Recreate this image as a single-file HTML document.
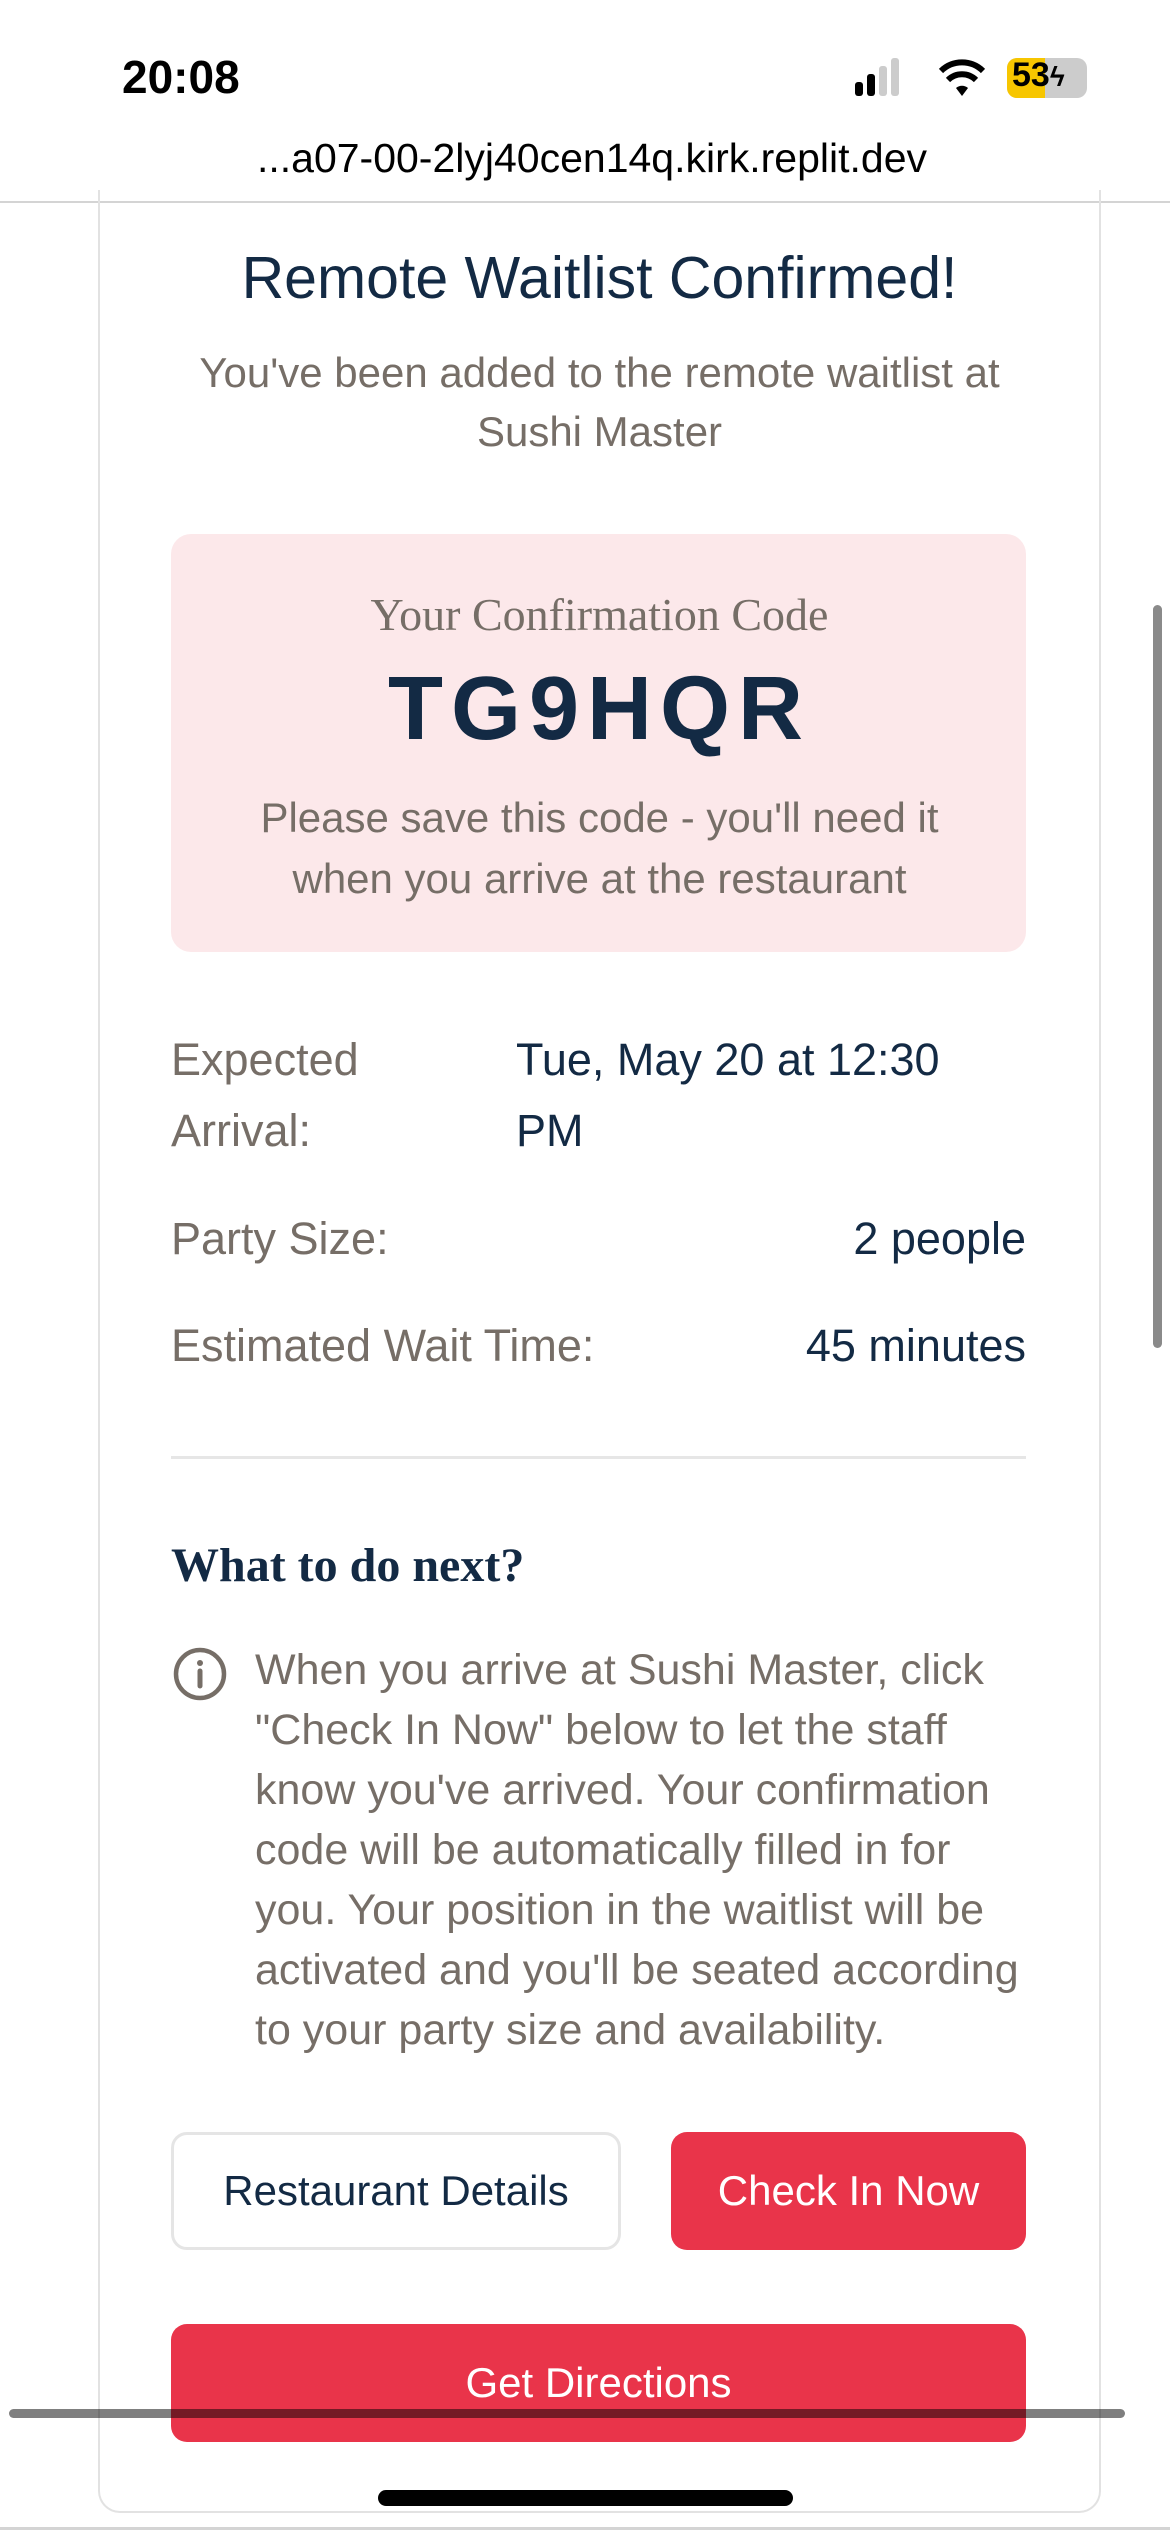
<!DOCTYPE html>
<html><head><meta charset="utf-8"><style>
*{margin:0;padding:0;box-sizing:border-box}
body{width:1170px;height:2532px;background:#fff;position:relative;overflow:hidden;font-family:"Liberation Sans",sans-serif}
.a{position:absolute;white-space:nowrap}
.navy{color:#132a44}
.gray{color:#766e67}
.c{left:98px;width:1003px;text-align:center}
.serif{font-family:"Liberation Serif",serif}
</style></head><body>
<div class="a" style="left:122px;top:50px;font-size:46px;font-weight:bold;color:#000">20:08</div>
<svg class="a" style="left:855px;top:58px" width="60" height="40"><rect x="0" y="24" width="8" height="14" rx="3" fill="#000"/><rect x="12" y="16" width="8" height="22" rx="3" fill="#000"/><rect x="24" y="8" width="8" height="30" rx="3" fill="#ccc"/><rect x="36" y="0" width="8" height="38" rx="3" fill="#ccc"/></svg>
<svg class="a" style="left:938px;top:58px" width="48" height="40" viewBox="0 0 48 40"><path d="M24 38 L18 30 A9 9 0 0 1 30 30 Z" fill="#000"/><path d="M10 22 A20 20 0 0 1 38 22" stroke="#000" stroke-width="6" fill="none"/><path d="M3 13 A30 30 0 0 1 45 13" stroke="#000" stroke-width="6" fill="none"/></svg>
<div class="a" style="left:1007px;top:58px;width:80px;height:40px;border-radius:10px;background:#ccc;overflow:hidden"><div style="width:38px;height:40px;background:#f7c600"></div></div>
<div class="a" style="left:1012px;top:56px;font-size:34px;font-weight:bold;color:#000">53<span style="font-size:28px">ϟ</span></div>
<div class="a" style="left:0;width:1184px;text-align:center;top:135px;font-size:41px;color:#000">...a07-00-2lyj40cen14q.kirk.replit.dev</div>
<div class="a" style="left:0;top:201px;width:1170px;height:2px;background:#d4d4d4"></div>
<div class="a" style="left:98px;top:190px;width:1003px;height:2323px;border:2px solid #e2e2e2;border-top:none;border-radius:0 0 22px 22px"></div>
<div class="a" style="left:1153px;top:605px;width:9px;height:743px;border-radius:5px;background:#8a8a8a"></div>
<div class="a c navy" style="top:244px;font-size:59px">Remote Waitlist Confirmed!</div>
<div class="a c gray" style="top:343px;font-size:42px;line-height:59px">You've been added to the remote waitlist at<br>Sushi Master</div>
<div class="a" style="left:171px;top:534px;width:855px;height:418px;border-radius:20px;background:#fce8ea"></div>
<div class="a c serif gray" style="top:588px;font-size:46px">Your Confirmation Code</div>
<div class="a c navy" style="top:658px;font-size:90px;font-weight:bold;letter-spacing:8px">TG9HQR</div>
<div class="a c gray" style="top:787px;font-size:42px;line-height:61px">Please save this code - you'll need it<br>when you arrive at the restaurant</div>
<div class="a gray" style="left:171px;top:1024px;font-size:45px;line-height:71px">Expected<br>Arrival:</div>
<div class="a navy" style="left:516px;top:1024px;font-size:45px;line-height:71px">Tue, May 20 at 12:30<br>PM</div>
<div class="a gray" style="left:171px;top:1213px;font-size:45px">Party Size:</div>
<div class="a navy" style="right:144px;top:1213px;font-size:45px">2 people</div>
<div class="a gray" style="left:171px;top:1320px;font-size:45px">Estimated Wait Time:</div>
<div class="a navy" style="right:144px;top:1320px;font-size:45px">45 minutes</div>
<div class="a" style="left:171px;top:1456px;width:855px;height:3px;background:#e6e6e6"></div>
<div class="a serif navy" style="left:171px;top:1538px;font-size:48px;font-weight:bold">What to do next?</div>
<svg class="a" style="left:172px;top:1646px" width="56" height="56" viewBox="0 0 56 56"><circle cx="28" cy="28" r="24" stroke="#766e67" stroke-width="4.5" fill="none"/><line x1="28" y1="25" x2="28" y2="40" stroke="#766e67" stroke-width="5" stroke-linecap="round"/><circle cx="28" cy="17" r="3" fill="#766e67"/></svg>
<div class="a gray" style="left:255px;top:1640px;font-size:43px;line-height:60px">When you arrive at Sushi Master, click<br>"Check In Now" below to let the staff<br>know you've arrived. Your confirmation<br>code will be automatically filled in for<br>you. Your position in the waitlist will be<br>activated and you'll be seated according<br>to your party size and availability.</div>
<div class="a navy" style="left:171px;top:2132px;width:450px;height:118px;border:3px solid #e5e5e5;border-radius:16px;font-size:42px;line-height:112px;text-align:center">Restaurant Details</div>
<div class="a" style="left:671px;top:2132px;width:355px;height:118px;background:#e9344a;border-radius:16px;color:#fff;font-size:42px;line-height:118px;text-align:center">Check In Now</div>
<div class="a" style="left:171px;top:2324px;width:855px;height:118px;background:#e9344a;border-radius:16px;color:#fff;font-size:42px;line-height:118px;text-align:center">Get Directions</div>
<div class="a" style="left:9px;top:2409px;width:1116px;height:9px;border-radius:5px;background:rgba(0,0,0,0.5)"></div>
<div class="a" style="left:378px;top:2490px;width:415px;height:16px;border-radius:8px;background:#000"></div>
<div class="a" style="left:0;top:2527px;width:1170px;height:3px;background:#d4d4d4"></div>
</body></html>
